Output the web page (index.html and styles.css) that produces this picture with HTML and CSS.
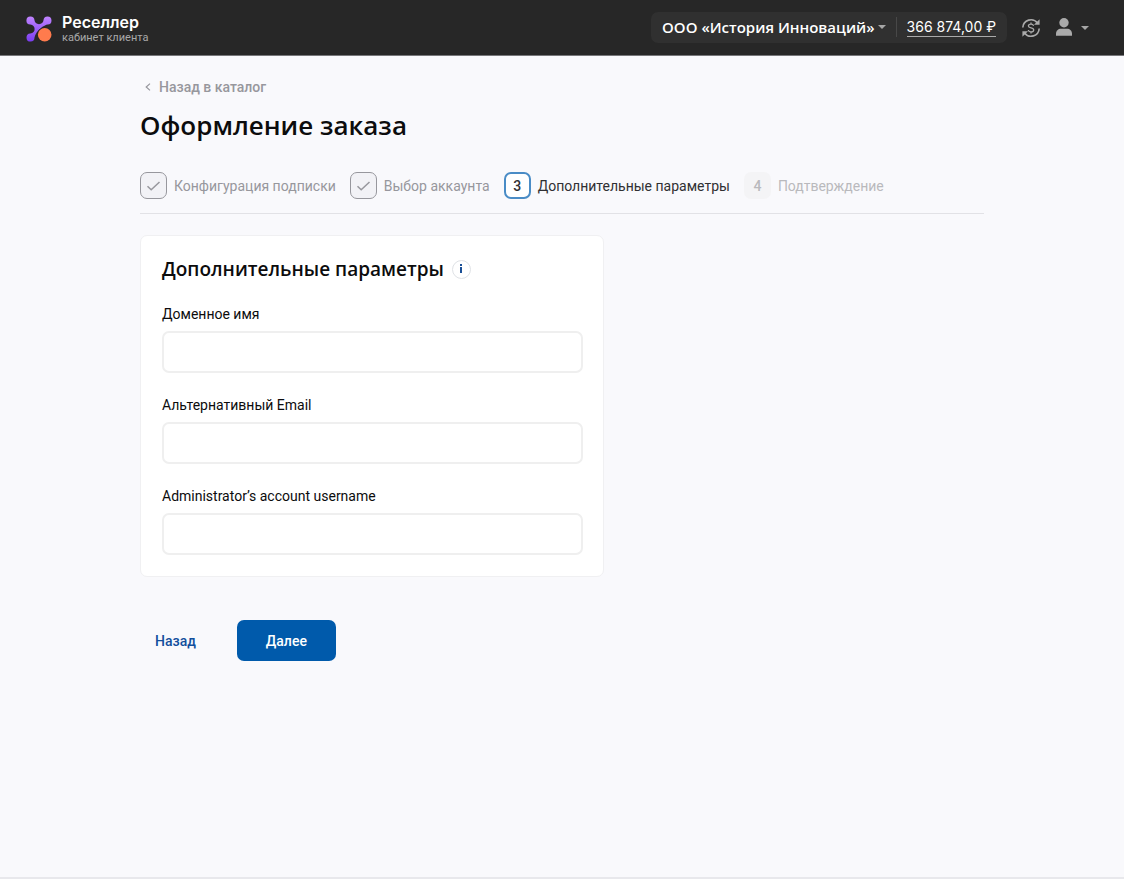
FILE: index.html
```html
<!DOCTYPE html>
<html lang="ru">
<head>
  <meta charset="utf-8">
  <meta name="viewport" content="width=device-width, initial-scale=1">
  <title>Оформление заказа</title>
  <link rel="stylesheet" href="styles.css">
</head>
<body>
  <header class="topbar">
    <a class="brand" href="#">
      <svg class="brand-logo" width="26" height="26" viewBox="0 0 26 26" aria-hidden="true">
        <defs>
          <linearGradient id="logo-fill" x1="0" y1="0" x2="0" y2="1">
            <stop offset="0" stop-color="#c084ff"/>
            <stop offset="1" stop-color="#7a3cf0"/>
          </linearGradient>
        </defs>
        <path fill="url(#logo-fill)" d="M4.500 0.500a4 4 0 0 1 4 3.800C8.700 6.500 10.500 8.200 13 8.200S17.300 6.500 17.500 4.300A4 4 0 1 1 21.700 8.500C18.500 8.700 10 14.500 8.500 21.500A4 4 0 1 1 4.300 17.500C7.200 17.200 8.600 15.600 8.600 13S7 8.900 4.300 8.500A4 4 0 0 1 4.500 .5z"/>
        <circle cx="18.700" cy="18.700" r="7.400" fill="#272727"/>
        <circle cx="18.700" cy="18.700" r="6.800" fill="#ff7b4d"/>
      </svg>
      <span class="brand-text">
        <span class="brand-name">Реселлер</span>
        <span class="brand-note">кабинет клиента</span>
      </span>
    </a>
    <div class="account">
      <div class="account-box">
        <button class="company" type="button">ООО «История Инноваций»<span class="caret"></span></button>
        <a class="balance" href="#">366 874,00 ₽</a>
      </div>
      <button class="icon-button" type="button" aria-label="Обмен валюты">
        <svg width="20" height="20" viewBox="0 0 20 20" fill="none" stroke="currentColor" stroke-width="1.600" aria-hidden="true">
          <path d="M1.800 9.500A8.200 8.200 0 0 1 16.500 5M18.200 10.500A8.200 8.200 0 0 1 3.500 15"/>
          <path d="M18.600 1.200v5.600H13zM1.400 18.800v-5.600H7z" fill="currentColor" stroke="none"/>
          <path stroke-width="1.300" d="M12.600 7.800C12.300 6.700 11.300 6.100 10 6.100c-1.500 0-2.600.7-2.600 1.900 0 2.700 5.300 1.200 5.300 4 0 1.200-1.200 1.900-2.700 1.900-1.400 0-2.500-.7-2.700-1.900M10 4.500v1.800M10 13.700v1.800"/>
        </svg>
      </button>
      <button class="icon-button user" type="button" aria-label="Профиль">
        <svg width="18" height="20" viewBox="0 0 18 20" fill="currentColor" aria-hidden="true">
          <circle cx="9" cy="4.700" r="4.700"/>
          <path d="M1 17.800v-2C1 12.800 3.200 10.800 6 10.800h6c2.800 0 5 2 5 5v2z"/>
        </svg>
        <span class="caret"></span>
      </button>
    </div>
  </header>

  <main class="page">
    <a class="back-link" href="#">
      <svg width="6" height="8" viewBox="0 0 6 8" fill="none" stroke="currentColor" stroke-width="1.200" aria-hidden="true"><path d="M5 .6 1.200 4 5 7.400"/></svg>
      Назад в каталог
    </a>
    <h1 class="title">Оформление заказа</h1>

    <ol class="steps">
      <li class="step done">
        <span class="step-mark"><svg width="15" height="12" viewBox="0 0 15 12" fill="none" stroke="currentColor" stroke-width="1.500" aria-hidden="true"><path d="M1.500 6.200 5.200 9.800 13.500 2"/></svg></span>
        Конфигурация подписки
      </li>
      <li class="step done">
        <span class="step-mark"><svg width="15" height="12" viewBox="0 0 15 12" fill="none" stroke="currentColor" stroke-width="1.500" aria-hidden="true"><path d="M1.500 6.200 5.200 9.800 13.500 2"/></svg></span>
        Выбор аккаунта
      </li>
      <li class="step current" aria-current="step"><span class="step-mark">3</span>Дополнительные параметры</li>
      <li class="step next"><span class="step-mark">4</span>Подтверждение</li>
    </ol>

    <form class="order">
      <section class="card">
        <h2 class="card-title">
          Дополнительные параметры
          <button class="info" type="button" aria-label="Подсказка">
            <svg width="4" height="10" viewBox="0 0 4 10" fill="currentColor" aria-hidden="true"><rect x="1" y="0" width="2" height="2"/><rect x="1" y="3" width="2" height="6"/></svg>
          </button>
        </h2>
        <div class="field">
          <label for="domain">Доменное имя</label>
          <input id="domain" type="text">
        </div>
        <div class="field">
          <label for="email">Альтернативный Email</label>
          <input id="email" type="email">
        </div>
        <div class="field">
          <label for="username">Administrator’s account username</label>
          <input id="username" type="text">
        </div>
      </section>
      <div class="actions">
        <button class="button link" type="button">Назад</button>
        <button class="button primary" type="submit">Далее</button>
      </div>
    </form>
  </main>
  <footer class="footer"></footer>
</body>
</html>
```

FILE: styles.css
```css
* {
  box-sizing: border-box;
}

body {
  margin: 0;
  min-height: 100vh;
  display: flex;
  flex-direction: column;
  background: #f9f9fc;
  color: #0c0c0d;
  font: 14px/20px Roboto, sans-serif;
}

button,
input {
  font: inherit;
}

button {
  padding: 0;
  border: 0;
  background: none;
  color: inherit;
  cursor: pointer;
}

a {
  color: inherit;
  text-decoration: none;
}

.topbar {
  display: flex;
  align-items: center;
  justify-content: space-between;
  min-height: 56px;
  padding: 0 35px 0 26px;
  border-bottom: 1px solid #77777a;
  background: #272727;
  color: #fff;
}

.brand {
  display: flex;
  align-items: center;
  gap: 10px;
  padding-top: 3px;
}

.brand-text {
  display: flex;
  flex-direction: column;
}

.brand-name {
  font: 600 16px/18px Inter, sans-serif;
}

.brand-note {
  color: #a9a9a9;
  font: 11px/14px Roboto, sans-serif;
}

.account {
  display: flex;
  align-items: center;
  gap: 14px;
}

.account-box {
  display: flex;
  align-items: center;
  padding: 5px 11px 6px;
  border-radius: 7px;
  background: #303030;
}

.company {
  display: flex;
  align-items: center;
  gap: 3px;
  padding-right: 10px;
  border-right: 1px solid #484848;
  font: 600 15px/20px "Open Sans", sans-serif;
}

.caret {
  border: 4px solid transparent;
  border-top-color: #a6a6a6;
  border-bottom: 0;
}

.balance {
  margin-left: 10px;
  border-bottom: 1px solid #aaa;
  font: 14px/18px Inter, sans-serif;
}

.icon-button {
  display: flex;
  align-items: center;
  color: #aaa;
}

.user {
  gap: 8px;
}

.page {
  flex: 1;
  width: 100%;
  max-width: 884px;
  margin: 0 auto;
  padding: 20px 20px;
}

.back-link {
  display: inline-flex;
  align-items: center;
  gap: 8px;
  padding-left: 5px;
  color: #97979d;
  font-weight: 500;
}

.title {
  margin: 8px 0 27px;
  font: 600 26px/40px "Open Sans", sans-serif;
}

.steps {
  display: flex;
  flex-wrap: wrap;
  gap: 14px;
  margin: 0 0 21px;
  padding: 0 0 14px;
  border-bottom: 1px solid #e2e2e6;
  list-style: none;
}

.step {
  display: flex;
  align-items: center;
  gap: 7px;
}

.step-mark {
  display: flex;
  align-items: center;
  justify-content: center;
  width: 27px;
  height: 27px;
  border: 1px solid transparent;
  border-radius: 7px;
  font-weight: 500;
}

.done {
  color: #97979d;
}

.done .step-mark {
  border-color: #97979d;
  background: #f2f2f6;
}

.current {
  color: #303033;
}

.current .step-mark {
  border: 2px solid #4a8cc6;
  background: #fff;
}

.next {
  color: #b9b9bd;
}

.next .step-mark {
  background: #f4f4f6;
}

.card {
  max-width: 464px;
  padding: 20px 20px 21px 21px;
  border: 1px solid #f0f0f2;
  border-radius: 7px;
  background: #fff;
}

.card-title {
  display: flex;
  align-items: center;
  gap: 8px;
  margin: 0 0 22px;
  font: 600 19px/26px "Open Sans", sans-serif;
}

.info {
  display: flex;
  align-items: center;
  justify-content: center;
  width: 19px;
  height: 19px;
  border: 1px solid #dfe2e6;
  border-radius: 50%;
  color: #1a4f96;
}

.field {
  display: flex;
  flex-direction: column;
  gap: 7px;
}

.field + .field {
  margin-top: 22px;
}

.field input {
  width: 100%;
  height: 42px;
  padding: 0 12px;
  border: 2px solid #efefef;
  border-radius: 7px;
  background: #fff;
}

.actions {
  display: flex;
  gap: 26px;
  margin-top: 43px;
}

.button {
  height: 41px;
  padding: 0 29px;
  border-radius: 7px;
  font-weight: 500;
}

.link {
  padding: 0 15px;
  color: #134f9c;
}

.primary {
  background: #005aab;
  color: #fff;
}

.footer {
  border-bottom: 2px solid #e8e8ec;
}
```
